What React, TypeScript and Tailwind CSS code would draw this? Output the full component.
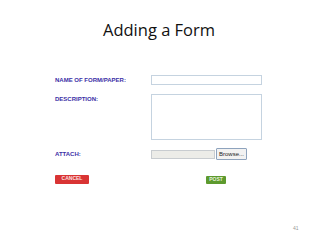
export default function App() {
  return (
    <div className="w-[320px] h-[240px] bg-white relative overflow-hidden" style={{ fontFamily: '"Liberation Sans", Arial, sans-serif' }}>
      <div className="pt-[19px] pl-[103px] h-[62px]">
        <div className="text-[16.5px] leading-[22px] text-[#111]" style={{ fontFamily: '"Open Sans", Lato, sans-serif' }}>Adding a Form</div>
      </div>
      <div className="pl-[55px] pr-[58px] flex flex-col">
        <div className="flex items-start h-[19px] pt-[13px] box-content">
          <div className="w-[96px] text-[6px] font-bold text-[#3b2ea6] leading-[8px] pt-[1px]">NAME OF FORM/PAPER:</div>
          <div className="w-[111px] h-[10px] border border-[#c5d3e0] bg-white"></div>
        </div>
        <div className="flex items-start">
          <div className="w-[96px] text-[6px] font-bold text-[#3b2ea6] leading-[8px] pt-[1px]">DESCRIPTION:</div>
          <div className="w-[111px] h-[46px] border border-[#c5d3e0] bg-white"></div>
        </div>
        <div className="flex items-center mt-[8px]">
          <div className="w-[96px] text-[6px] font-bold text-[#3b2ea6] leading-[8px]">ATTACH:</div>
          <div className="flex items-center gap-[1px]">
            <div className="w-[64px] h-[9px] border border-[#c8ccd0] bg-[#ecece8]"></div>
            <div className="w-[31px] h-[12px] border border-[#8ea3bd] bg-[#f2f2f2] rounded-[1px] text-[6px] leading-[10px] text-center" style={{ color: '#222222' }}>Browse...</div>
          </div>
        </div>
        <div className="flex items-center mt-[14px]">
          <div className="w-[34px] h-[9px] bg-[#d93434] rounded-[1px] text-[5px] font-bold text-[#fde0e0] flex items-center justify-center">CANCEL</div>
          <div className="ml-[117px] mt-[2px] w-[20px] h-[8px] bg-[#5d9a2e] rounded-[1px] text-[5px] font-bold text-[#e6f2dc] flex items-center justify-center">POST</div>
        </div>
      </div>
      <div className="absolute left-[293px] top-[225px] text-[5px] text-[#999]">41</div>
    </div>
  );
}
